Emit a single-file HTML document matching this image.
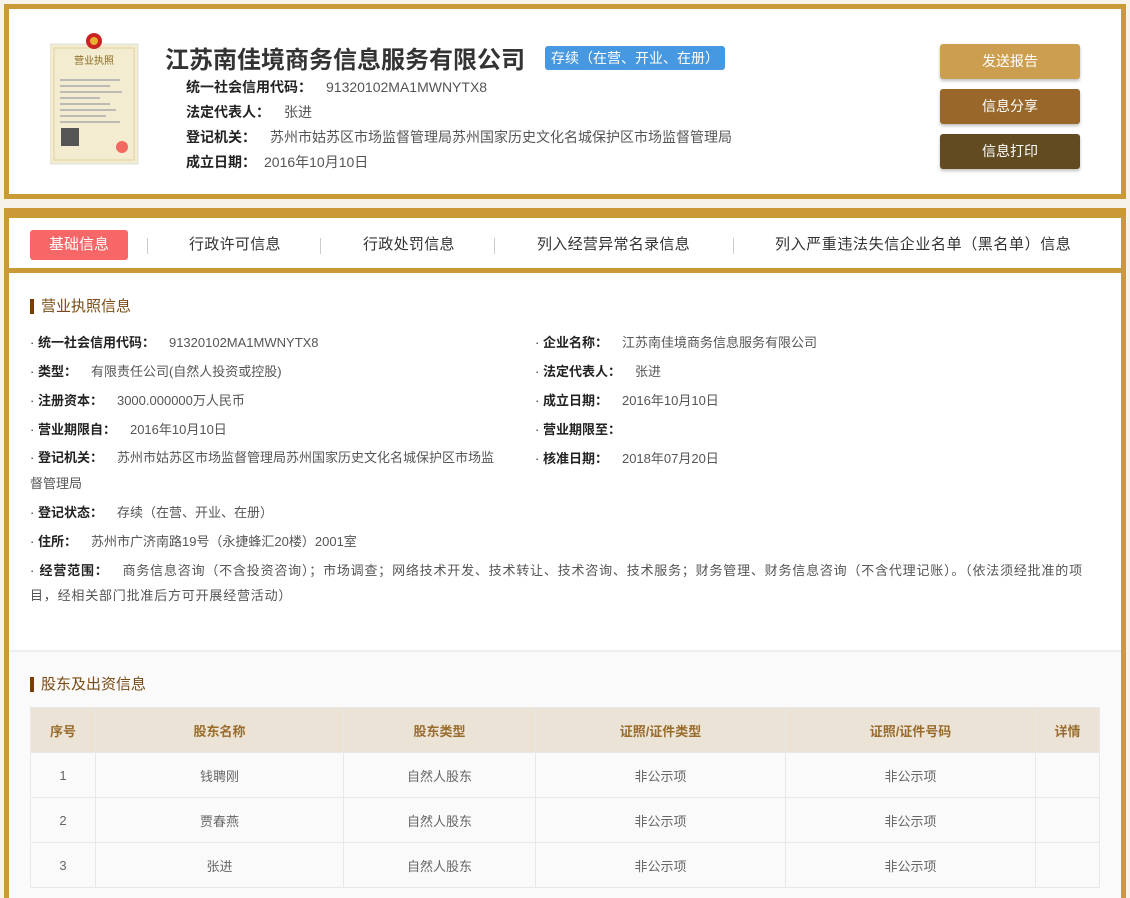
<!DOCTYPE html><html><head><meta charset="utf-8"><style>
*{margin:0;padding:0;box-sizing:border-box}
html{width:1130px;height:898px;overflow:hidden}
body{width:1130px;height:898px;background:#f7f3ea;font-family:"Liberation Sans","Noto Sans CJK SC",sans-serif;font-size:13px;color:#333;position:relative;overflow:hidden}
.a{position:absolute;white-space:nowrap}
.box1{position:absolute;left:4px;top:4px;width:1122px;height:195px;border:5px solid #c99a36;background:#fff}
.box2{position:absolute;left:4px;top:208px;width:1122px;height:690px;border:5px solid #c99a36;border-top-width:10px;border-bottom:0;background:#fff}
.btn{position:absolute;left:940px;width:140px;height:35px;border-radius:3px;color:#fff;font-size:14px;text-align:center;line-height:35px;box-shadow:0 2px 3px rgba(0,0,0,.25)}
.b{font-weight:bold;color:#222}
.v{color:#555;margin-left:14px}
.tab{position:absolute;top:233px;font-size:15px;color:#333;letter-spacing:.3px}
.sep{position:absolute;top:238px;width:1px;height:16px;background:#ccc}
table{position:absolute;left:30px;top:707px;width:1070px;border-collapse:collapse;background:#fafafa}
td,th{border:1px solid #e8e8e8;text-align:center;height:45px;color:#666;font-weight:normal}
th{background:#ebe3d6;color:#9a6c2c;font-weight:bold}
.h{position:absolute;font-size:15px;color:#7a4a12;padding-left:7px;border-left:4px solid #7a3d00;line-height:15px}
</style></head><body>
<div class="box1"></div>
<svg class="a" style="left:50px;top:32px" width="90" height="134">
<rect x="0" y="12" width="88" height="120" fill="#f4ecd0" stroke="#ddd"/>
<rect x="4" y="16" width="80" height="112" fill="none" stroke="#e0cfa0"/>
<circle cx="44" cy="9" r="8" fill="#c22"/><circle cx="44" cy="9" r="4" fill="#e6b030"/>
<text x="44" y="32" font-size="10" fill="#8a6a20" text-anchor="middle" font-family="Noto Sans CJK SC">营业执照</text>
<g stroke="#aaa" stroke-width="1.5"><line x1="10" y1="48" x2="70" y2="48"/><line x1="10" y1="54" x2="60" y2="54"/><line x1="10" y1="60" x2="72" y2="60"/><line x1="10" y1="66" x2="50" y2="66"/><line x1="10" y1="72" x2="60" y2="72"/><line x1="10" y1="78" x2="66" y2="78"/><line x1="10" y1="84" x2="56" y2="84"/><line x1="10" y1="90" x2="70" y2="90"/></g>
<rect x="11" y="96" width="18" height="18" fill="#555"/><circle cx="72" cy="115" r="6" fill="#e33" opacity=".7"/>
</svg>
<div class="a" style="left:165px;top:40px;font-size:24px;font-weight:bold;color:#333">江苏南佳境商务信息服务有限公司</div>
<div class="a" style="left:545px;top:46px;height:24px;padding:0 6px;background:#4698e0;color:#fff;border-radius:3px;font-size:14px;line-height:24px">存续（在营、开业、在册）</div>
<div class="a" style="left:186px;top:77px;font-size:14px"><span class="b">统一社会信用代码：</span><span class="v">91320102MA1MWNYTX8</span></div>
<div class="a" style="left:186px;top:102px;font-size:14px"><span class="b">法定代表人：</span><span class="v">张进</span></div>
<div class="a" style="left:186px;top:127px;font-size:14px"><span class="b">登记机关：</span><span class="v">苏州市姑苏区市场监督管理局苏州国家历史文化名城保护区市场监督管理局</span></div>
<div class="a" style="left:186px;top:152px;font-size:14px"><span class="b">成立日期：</span><span class="v" style="margin-left:8px">2016年10月10日</span></div>
<div class="btn" style="top:44px;background:#cc9e4f">发送报告</div>
<div class="btn" style="top:89px;background:#99672a">信息分享</div>
<div class="btn" style="top:134px;background:#624b20">信息打印</div>
<div class="box2"></div>
<div class="a" style="left:9px;top:268px;width:1112px;height:5px;background:#c99a36"></div>
<div class="a" style="left:9px;top:650px;width:1112px;height:248px;background:#fafafa;border-top:2px solid #eee"></div>
<div class="a" style="left:30px;top:230px;width:98px;height:30px;background:#f76767;border-radius:3px;color:#fff;font-size:15px;text-align:center;line-height:30px">基础信息</div>
<div class="sep" style="left:147px"></div>
<div class="tab" style="left:189px">行政许可信息</div>
<div class="sep" style="left:320px"></div>
<div class="tab" style="left:363px">行政处罚信息</div>
<div class="sep" style="left:494px"></div>
<div class="tab" style="left:537px">列入经营异常名录信息</div>
<div class="sep" style="left:733px"></div>
<div class="tab" style="left:775px;letter-spacing:.6px">列入严重违法失信企业名单（黑名单）信息</div>
<div class="h" style="left:30px;top:299px">营业执照信息</div>
<div class="a" style="left:30px;top:328px;line-height:29px">
<div>· <span class="b">统一社会信用代码：</span><span class="v">91320102MA1MWNYTX8</span></div>
<div>· <span class="b">类型：</span><span class="v">有限责任公司(自然人投资或控股)</span></div>
<div>· <span class="b">注册资本：</span><span class="v">3000.000000万人民币</span></div>
<div>· <span class="b">营业期限自：</span><span class="v">2016年10月10日</span></div>
</div>
<div class="a" style="left:30px;top:445px;width:472px;white-space:normal;line-height:26px">· <span class="b">登记机关：</span><span class="v">苏州市姑苏区市场监督管理局苏州国家历史文化名城保护区市场监督管理局</span></div>
<div class="a" style="left:30px;top:498px;line-height:29px">
<div>· <span class="b">登记状态：</span><span class="v">存续（在营、开业、在册）</span></div>
<div>· <span class="b">住所：</span><span class="v">苏州市广济南路19号（永捷蜂汇20楼）2001室</span></div>
</div>
<div class="a" style="left:30px;top:558px;width:1058px;white-space:normal;line-height:25px;letter-spacing:.8px">· <span class="b">经营范围：</span><span class="v">商务信息咨询（不含投资咨询）；市场调查；网络技术开发、技术转让、技术咨询、技术服务；财务管理、财务信息咨询（不含代理记账）。（依法须经批准的项目，经相关部门批准后方可开展经营活动）</span></div>
<div class="a" style="left:535px;top:328px;line-height:29px">
<div>· <span class="b">企业名称：</span><span class="v">江苏南佳境商务信息服务有限公司</span></div>
<div>· <span class="b">法定代表人：</span><span class="v">张进</span></div>
<div>· <span class="b">成立日期：</span><span class="v">2016年10月10日</span></div>
<div>· <span class="b">营业期限至：</span></div>
<div>· <span class="b">核准日期：</span><span class="v">2018年07月20日</span></div>
</div>
<div class="h" style="left:30px;top:677px">股东及出资信息</div>
<table>
<tr><th style="width:65px">序号</th><th style="width:248px">股东名称</th><th style="width:192px">股东类型</th><th style="width:250px">证照/证件类型</th><th style="width:250px">证照/证件号码</th><th>详情</th></tr>
<tr><td>1</td><td>钱聘刚</td><td>自然人股东</td><td>非公示项</td><td>非公示项</td><td></td></tr>
<tr><td>2</td><td>贾春燕</td><td>自然人股东</td><td>非公示项</td><td>非公示项</td><td></td></tr>
<tr><td>3</td><td>张进</td><td>自然人股东</td><td>非公示项</td><td>非公示项</td><td></td></tr>
</table>
</body></html>
